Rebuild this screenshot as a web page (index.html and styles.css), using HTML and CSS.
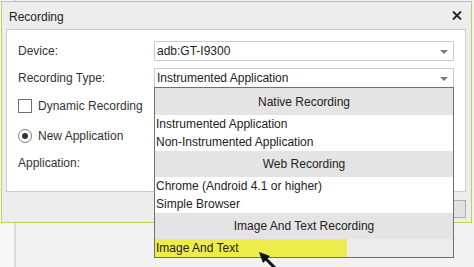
FILE: index.html
```html
<!DOCTYPE html>
<html lang="en">
<head>
    <meta charset="UTF-8">
    <title>Recording</title>
    <link rel="stylesheet" href="styles.css">
</head>
<body>
    <div class="dialog">
        <div class="titlebar">
            <span class="title">Recording</span>
            <svg class="close" width="10" height="9" viewBox="0 0 10 9">
                <path d="M1 0.5 L9 8.5 M9 0.5 L1 8.5" stroke="#222" stroke-width="1.8" fill="none"/>
            </svg>
        </div>
        <div class="panel">
            <div class="form-row">
                <label>Device:</label>
                <div class="select">adb:GT-I9300<span class="arrow"></span></div>
            </div>
            <div class="form-row">
                <label>Recording Type:</label>
                <div class="select">Instrumented Application<span class="arrow"></span></div>
            </div>
            <div class="option-row check-row">
                <span class="checkbox"></span>Dynamic Recording
            </div>
            <div class="option-row radio-row">
                <span class="radio"><span class="dot"></span></span>New Application
            </div>
            <div class="option-row app-row">Application:</div>
        </div>
        <div class="buttons">
            <button type="button">OK</button>
        </div>
    </div>

    <!-- open dropdown of Recording Type -->
    <div class="dropdown">
        <div class="group first">Native Recording</div>
        <div class="item">Instrumented Application</div>
        <div class="item">Non-Instrumented Application</div>
        <div class="group">Web Recording</div>
        <div class="item">Chrome (Android 4.1 or higher)</div>
        <div class="item">Simple Browser</div>
        <div class="group">Image And Text Recording</div>
        <div class="item last"><span class="mark">Image And Text</span></div>
    </div>

    <svg class="pointer" width="24" height="20" viewBox="0 0 24 20">
        <polygon points="0,0 11,4 4,11" fill="#111"/>
        <line x1="6" y1="6" x2="20" y2="20" stroke="#111" stroke-width="3"/>
    </svg>
</body>
</html>
```

FILE: styles.css
```css
html, body {
    margin: 0;
    padding: 0;
}
body {
    width: 474px;
    height: 267px;
    overflow: hidden;
    position: relative;
    font-family: "Liberation Sans", Arial, sans-serif;
    font-size: 12px;
    color: #333;
    background:
        linear-gradient(to right, #f7f7f7 0, #f7f7f7 14px, #dcdcdc 14px, #dcdcdc 16px, #f2f2f2 16px);
}
.dialog {
    box-sizing: border-box;
    width: 471px;
    height: 222px;
    margin: 1px 0 0 1px;
    border: 1px solid #b9d450;
    background: #ededed;
    display: flex;
    flex-direction: column;
}
.titlebar {
    height: 27px;
    display: flex;
    align-items: center;
    justify-content: space-between;
    padding: 3px 9px 0 7px;
    box-sizing: border-box;
    flex-shrink: 0;
}
.title {
    color: #222;
}
.close {
    margin-top: -4px;
}
.panel {
    box-sizing: border-box;
    height: 163px;
    margin: 0 5px 0 4px;
    padding: 11px 10px 0 11px;
    background: #ffffff;
    border: 1px solid #cdcdd8;
    flex-shrink: 0;
}
.form-row {
    display: flex;
    align-items: center;
    height: 20px;
    margin-bottom: 7px;
}
.form-row label {
    width: 136px;
    flex-shrink: 0;
}
.select {
    position: relative;
    box-sizing: border-box;
    width: 300px;
    height: 20px;
    line-height: 18px;
    padding-left: 2px;
    border: 1px solid #cbcbd6;
    color: #222;
    background: #fff;
}
.arrow {
    position: absolute;
    right: 5px;
    top: 8px;
    width: 0;
    height: 0;
    border-left: 4px solid transparent;
    border-right: 4px solid transparent;
    border-top: 4px solid #7a7a7a;
}
.option-row {
    display: flex;
    align-items: center;
    height: 20px;
}
.check-row {
    margin-top: 8px;
}
.radio-row {
    margin-top: 10px;
}
.app-row {
    margin-top: 7px;
}
.checkbox {
    box-sizing: border-box;
    width: 14px;
    height: 14px;
    border: 1px solid #6e6e6e;
    background: #fff;
    margin-right: 6px;
}
.radio {
    box-sizing: border-box;
    width: 14px;
    height: 14px;
    border: 1px solid #7a7a7a;
    border-radius: 50%;
    margin-right: 6px;
    display: flex;
    align-items: center;
    justify-content: center;
}
.radio .dot {
    width: 6px;
    height: 6px;
    border-radius: 50%;
    background: #333;
}
.buttons {
    display: flex;
    justify-content: flex-end;
    padding: 8px 5px 0 0;
}
.buttons button {
    box-sizing: border-box;
    width: 70px;
    height: 18px;
    border: 1px solid #adadad;
    background: #e1e1e1;
    font-family: inherit;
    font-size: 12px;
    padding: 0;
}
/* Dropdown list */
.dropdown {
    position: absolute;
    left: 154px;
    top: 87px;
    box-sizing: border-box;
    width: 300px;
    height: 171px;
    border: 1px solid #6f6f6f;
    background: #ececec;
    color: #222;
}
.group {
    height: 26px;
    line-height: 26px;
    text-align: center;
    background: #e4e4e4;
}
.group.first {
    height: 27px;
    line-height: 28px;
}
.item {
    height: 18px;
    line-height: 18px;
    padding-left: 1px;
    background: #fff;
    white-space: nowrap;
}
.item.last {
    background: #ececec;
    padding-left: 0;
}
.mark {
    display: block;
    width: 191px;
    padding-left: 1px;
    background: #eeec4d;
}
.pointer {
    position: absolute;
    left: 259px;
    top: 252px;
}
```
